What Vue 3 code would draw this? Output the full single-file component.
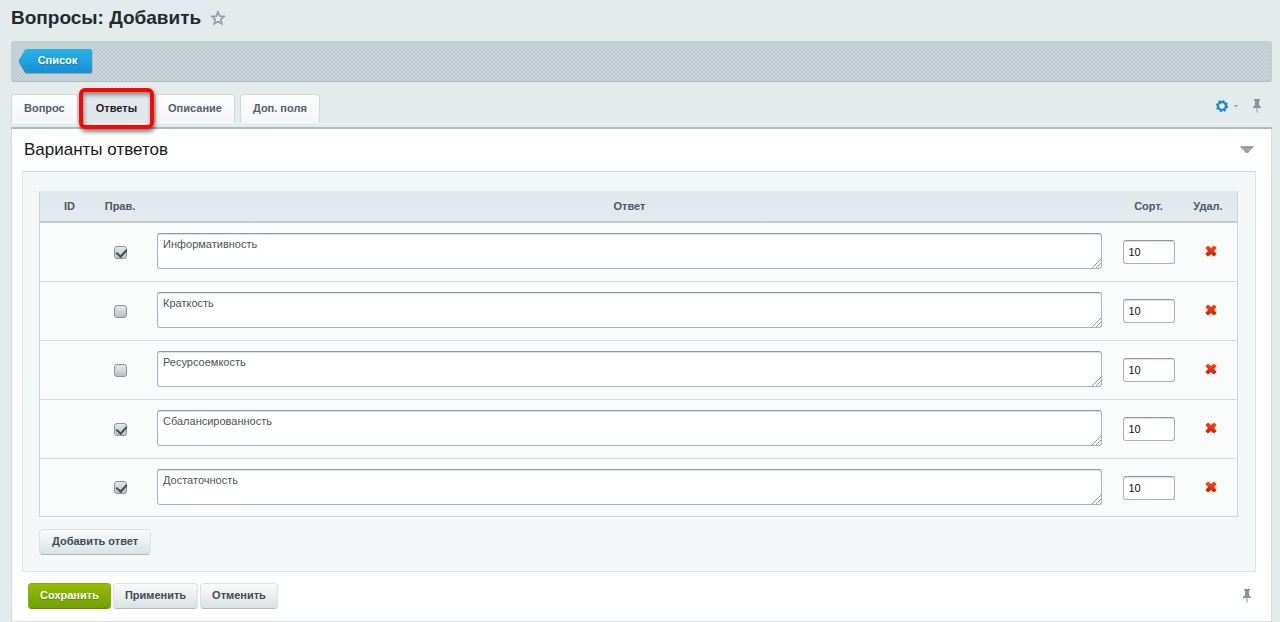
<script setup>
import { ref } from 'vue'

const tabs = ref([
  { id: 'question', title: 'Вопрос' },
  { id: 'answers', title: 'Ответы' },
  { id: 'about', title: 'Описание' },
  { id: 'fields', title: 'Доп. поля' }
])
const active = ref('answers')
const answers = ref([
  { text: 'Информативность', right: true, sort: 10 },
  { text: 'Краткость', right: false, sort: 10 },
  { text: 'Ресурсоемкость', right: false, sort: 10 },
  { text: 'Сбалансированность', right: true, sort: 10 },
  { text: 'Достаточность', right: true, sort: 10 }
])
const addAnswer = () => answers.value.push({ text: '', right: false, sort: 10 })
const removeAnswer = (index) => answers.value.splice(index, 1)
</script>

<template>
  <div class="page">
    <header class="title">
      <h1>Вопросы: Добавить</h1>
      <button class="icon" type="button" aria-label="В избранное">
        <svg width="16" height="16" viewBox="0 0 16 16">
          <path d="M8 2 L9.7 6.1 L14 6.5 L10.8 9.4 L11.8 13.8 L8 11.5 L4.2 13.8 L5.2 9.4 L2 6.5 L6.3 6.1 Z" fill="#eef2f5" stroke="#959fab" stroke-width="1.7" />
        </svg>
      </button>
    </header>

    <nav class="toolbar">
      <a class="back" href="#list">
        <svg width="75" height="27" viewBox="0 0 75 27" aria-hidden="true">
          <defs>
            <linearGradient id="back-fill" x1="0" y1="0" x2="0" y2="1">
              <stop offset="0" stop-color="#27b4e3" />
              <stop offset="1" stop-color="#188fd4" />
            </linearGradient>
          </defs>
          <path d="M9 2 H72 Q74.500 2 74.500 4.500 V23.500 Q74.500 26 72 26 H9 Q7.500 26 6.500 24.500 L1 15 Q0.500 14 1 13 L6.500 3.500 Q7.500 2 9 2 Z" fill="#8ba8b5" />
          <path d="M9 1 H72 Q74 1 74 3 V23 Q74 25 72 25 H9 Q7.500 25 6.500 23.500 L1 14 Q0.500 13 1 12 L6.500 2.500 Q7.500 1 9 1 Z" fill="url(#back-fill)" />
        </svg>
        <span>Список</span>
      </a>
    </nav>

    <div class="tabbar">
      <div class="tabs" role="tablist">
        <button
          v-for="tab in tabs"
          :key="tab.id"
          type="button"
          role="tab"
          class="tab"
          :class="{ current: tab.id === active }"
          :aria-selected="tab.id === active"
          @click="active = tab.id"
        >{{ tab.title }}</button>
      </div>
      <div class="tools">
        <button class="icon gear" type="button" aria-label="Настройки">
          <svg width="24" height="14" viewBox="0 0 24 14">
            <circle cx="7" cy="7" r="3.900" fill="#eef6fb" stroke="#1e86cc" stroke-width="2.400" />
            <circle cx="7" cy="7" r="5.300" fill="none" stroke="#1e86cc" stroke-width="1.600" stroke-dasharray="2.080 2.080" />
            <path d="M18.500 6 H23 L20.750 8.500 Z" fill="#9ca5a9" />
          </svg>
        </button>
        <button class="icon" type="button" aria-label="Закрепить вкладки">
          <svg width="10" height="14" viewBox="0 0 10 14">
            <path d="M2 0 H8 V1.500 H7 V6 L9 8 V9 H1 V8 L3 6 V1.500 H2 Z M4.500 9 H5.500 V13.500 H4.500 Z" fill="#8d9497" />
          </svg>
        </button>
      </div>
    </div>

    <main class="panel">
      <div class="heading">
        <h2>Варианты ответов</h2>
        <button class="icon" type="button" aria-label="Свернуть">
          <svg width="14" height="8" viewBox="0 0 14 8">
            <path d="M0 0.500 H14 L8 7 H6 Z" fill="#9ba5a8" />
            <path d="M0 0.500 H14 L13 1.600 H1 Z" fill="#7c8789" />
          </svg>
        </button>
      </div>

      <section class="content">
        <table>
          <colgroup>
            <col class="c-id" /><col class="c-right" /><col /><col class="c-sort" /><col class="c-del" />
          </colgroup>
          <thead>
            <tr><th>ID</th><th>Прав.</th><th>Ответ</th><th>Сорт.</th><th>Удал.</th></tr>
          </thead>
          <tbody>
            <tr v-for="(answer, i) in answers" :key="i">
              <td></td>
              <td><input v-model="answer.right" class="check" type="checkbox" aria-label="Правильный ответ" /></td>
              <td class="answer"><textarea v-model="answer.text" aria-label="Ответ"></textarea></td>
              <td><input v-model="answer.sort" class="sort" type="text" aria-label="Сортировка" /></td>
              <td class="del">
                <button class="icon" type="button" aria-label="Удалить" @click="removeAnswer(i)">
                  <svg width="12" height="12" viewBox="0 0 12 12">
                    <defs>
                      <linearGradient id="cross" x1="0" y1="0" x2="0" y2="1">
                        <stop offset="0" stop-color="#ff4a1c" />
                        <stop offset="1" stop-color="#cf1a00" />
                      </linearGradient>
                    </defs>
                    <path d="M3 0.500 L6 3 L9 0.500 L11.700 3 L9 6 L11.700 9 L9 11.500 L6 9 L3 11.500 L0.300 9 L3 6 L0.300 3 Z" fill="url(#cross)" />
                  </svg>
                </button>
              </td>
            </tr>
          </tbody>
        </table>
        <button class="btn add" type="button" @click="addAnswer">Добавить ответ</button>
      </section>

      <footer class="actions">
        <button class="btn save" type="button">Сохранить</button>
        <button class="btn" type="button">Применить</button>
        <button class="btn" type="button">Отменить</button>
        <button class="icon pin" type="button" aria-label="Закрепить панель">
          <svg width="10" height="14" viewBox="0 0 10 14">
            <path d="M2 0 H8 V1.500 H7 V6 L9 8 V9 H1 V8 L3 6 V1.500 H2 Z M4.500 9 H5.500 V13.500 H4.500 Z" fill="#8d9497" />
          </svg>
        </button>
      </footer>
    </main>
  </div>
</template>

<style>
body {
  background: #e3ebed;
}
</style>

<style scoped>
.page,
.page * {
  box-sizing: border-box;
}
.page {
  padding: 0 8px 1px 11px;
  font-family: "Liberation Sans", Arial, sans-serif;
  font-size: 11px;
  color: #3f4b54;
}
button {
  font-family: inherit;
  cursor: pointer;
}
.icon {
  display: block;
  padding: 0;
  border: 0;
  background: none;
}
.icon svg {
  display: block;
}
.title {
  display: flex;
  align-items: center;
  gap: 9px;
  height: 41px;
  padding-bottom: 6px;
}
h1 {
  margin: 0;
  font-size: 19px;
  line-height: 24px;
  color: #22292f;
}
.toolbar {
  height: 41px;
  padding: 6px;
  border: 1px solid #c3cdd1;
  border-bottom-color: #b0bdc2;
  border-radius: 3px;
  background:
    radial-gradient(circle, #b9c5ca 20%, transparent 30%) 0 0 / 4px 4px,
    radial-gradient(circle, #b9c5ca 20%, transparent 30%) 2px 2px / 4px 4px,
    #cad4d8;
}
.back {
  position: relative;
  display: block;
  width: 75px;
  height: 27px;
  color: #fff;
  font-weight: bold;
  text-decoration: none;
}
.back svg {
  position: absolute;
  inset: 0;
}
.back span {
  position: absolute;
  inset: 0 0 0 4px;
  line-height: 24px;
  text-align: center;
  text-shadow: 0 1px 1px #147ab0;
}
.tabbar {
  display: flex;
  justify-content: space-between;
  height: 47px;
  padding-top: 12px;
  border-bottom: 2px solid #afbabd;
  background: linear-gradient(#f1f5f5, #f1f5f5) 0 41px / 100% 1px no-repeat;
}
.tabs {
  display: flex;
  gap: 5px;
}
.tab {
  position: relative;
  height: 29px;
  padding: 0 12px 2px;
  border: 1px solid #cfd8db;
  border-bottom: 0;
  border-radius: 3px 3px 0 0;
  background: linear-gradient(#fcfdfd, #f3f6f6);
  color: #555f68;
  font-size: 11px;
  font-weight: bold;
}
.tab.current {
  border-color: transparent;
  background: #e0e8eb;
  color: #1c2125;
}
.tab.current::after {
  content: "";
  position: absolute;
  inset: -7px -5px -6px -5px;
  z-index: 1;
  border: 4px solid #fb0505;
  border-radius: 6px;
  box-shadow: 1px 3px 4px rgba(0, 0, 0, 0.5), inset 1px 3px 4px rgba(0, 0, 0, 0.4);
}
.tools {
  display: flex;
  align-items: center;
  gap: 13px;
  padding: 0 10px 10px 0;
}
.panel {
  border: 1px solid #d2dcdf;
  border-top: 0;
  background: #fff;
  padding: 0 15px 0 10px;
}
.heading {
  display: flex;
  align-items: center;
  justify-content: space-between;
  height: 42px;
  padding: 0 2px;
}
h2 {
  margin: 0;
  font-size: 17px;
  font-weight: normal;
  color: #15191c;
}
.content {
  padding: 19px 17px 16px 16px;
  border: 1px solid #dfe7ea;
  border-top-color: #cfd9dc;
  background: #f4f8f9;
}
table {
  width: 100%;
  margin-bottom: 12px;
  table-layout: fixed;
  border-collapse: separate;
  border-spacing: 0;
  border: 1px solid #cdd7db;
  border-top-color: #e0e8eb;
  background: #fafcfb;
}
.c-id {
  width: 59px;
}
.c-right {
  width: 42px;
}
.c-sort {
  width: 61px;
}
.c-del {
  width: 58px;
}
th {
  height: 31px;
  padding: 0 0 2px;
  border-bottom: 2px solid #c3cbcc;
  background: linear-gradient(#dfe8eb, #e4ebee);
  color: #4c565f;
  font-size: 11px;
}
td {
  height: 59px;
  padding: 0;
  border-bottom: 1px solid #d2dce0;
  text-align: center;
}
tbody tr:last-child td {
  border-bottom: 0;
  height: 57px;
}
.answer {
  padding: 0 16px;
  vertical-align: top;
}
textarea {
  display: block;
  width: 100%;
  height: 36px;
  margin: 10px 0 0;
  padding: 4px 5px;
  border: 1px solid #aab3bd;
  border-top-color: #8f99a3;
  border-radius: 3px;
  outline: 0;
  resize: vertical;
  overflow: auto;
  background: #fff;
  box-shadow: inset 0 1px 1px #d9dee2;
  color: #4c5358;
  font-family: inherit;
  font-size: 11px;
  line-height: 13px;
}
textarea::-webkit-resizer {
  background: linear-gradient(135deg, transparent 52%, #9a9a9a 52% 58%, transparent 58% 72%, #9a9a9a 72% 78%, transparent 78%) 100% 100% / 10px 10px no-repeat;
}
.sort {
  display: block;
  width: 52px;
  height: 24px;
  margin: 0 auto;
  padding: 0 5px;
  border: 1px solid #a9b1bd;
  border-top-color: #8f99a3;
  border-radius: 3px;
  background: #fff;
  box-shadow: inset 0 1px 1px #d9dee2;
  color: #111;
  font-family: inherit;
  font-size: 11px;
}
.check {
  appearance: none;
  position: relative;
  display: block;
  width: 13px;
  height: 13px;
  margin: 0 auto;
  border: 1px solid #8d9498;
  border-radius: 3px;
  background: linear-gradient(#e6e9eb, #b9c0c4);
}
.check:checked::after {
  content: "";
  position: absolute;
  left: 3px;
  top: 0;
  width: 5px;
  height: 8px;
  border: solid #454c51;
  border-width: 0 2px 2px 0;
  transform: rotate(42deg);
}
.del .icon {
  margin: 0 auto;
  padding: 0 0 2px 5px;
}
.btn {
  display: block;
  height: 26px;
  padding: 0 11px 2px;
  border: 1px solid #dbe2e5;
  border-bottom-color: #afbabf;
  border-radius: 4px;
  background: linear-gradient(#fbfcfc, #d9e2e5);
  color: #3f4b54;
  font-size: 11px;
  font-weight: bold;
}
.add {
  padding: 0 12px 2px;
}
.actions {
  display: flex;
  align-items: center;
  gap: 2px;
  height: 49px;
  padding: 0 0 2px 6px;
}
.save {
  border-color: #86b000;
  border-bottom-color: #648500;
  background: linear-gradient(#95bd00, #739f00);
  color: #fff;
  text-shadow: 0 1px 1px #5d7e00;
}
.pin {
  margin-left: auto;
  margin-right: 4px;
}
</style>
